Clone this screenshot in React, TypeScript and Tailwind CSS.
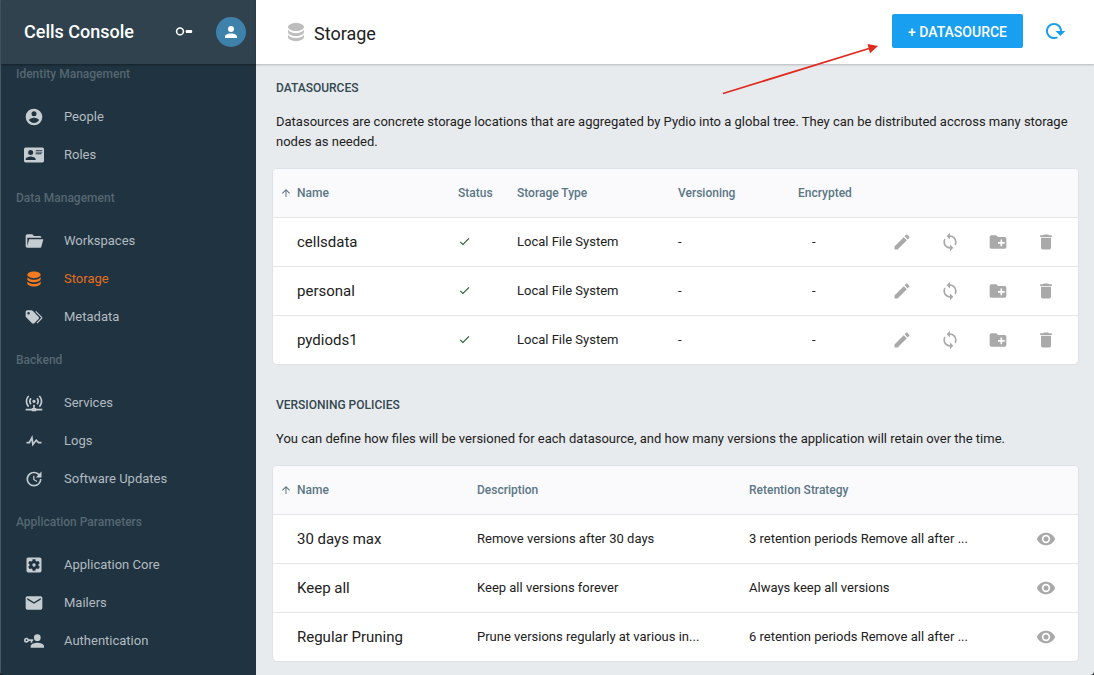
import React from "react";

const icons = {
  accountCircle:
    "M12,19.2C9.5,19.2 7.29,17.92 6,16C6.03,14 10,12.9 12,12.9C14,12.9 17.97,14 18,16C16.71,17.92 14.5,19.2 12,19.2M12,5A3,3 0 0,1 15,8A3,3 0 0,1 12,11A3,3 0 0,1 9,8A3,3 0 0,1 12,5M12,2A10,10 0 0,0 2,12A10,10 0 0,0 12,22A10,10 0 0,0 22,12C22,6.47 17.5,2 12,2Z",
  card: "M2,3H22C23.05,3 24,3.95 24,5V19C24,20.05 23.05,21 22,21H2C0.95,21 0,20.05 0,19V5C0,3.95 0.95,3 2,3M14,6V7H22V6H14M14,8V9H21.5L22,9V8H14M14,10V11H21V10H14M8,13.91C6,13.91 2,15 2,17V18H14V17C14,15 10,13.91 8,13.91M8,6A3,3 0 0,0 5,9A3,3 0 0,0 8,12A3,3 0 0,0 11,9A3,3 0 0,0 8,6Z",
  folderOpen:
    "M19,20H4C2.89,20 2,19.1 2,18V6C2,4.89 2.89,4 4,4H10L12,6H19A2,2 0 0,1 21,8H21L4,8V18L6.14,10H23.21L20.93,18.5C20.7,19.37 19.92,20 19,20Z",
  database:
    "M12,3C7.58,3 4,4.79 4,7C4,9.21 7.58,11 12,11C16.42,11 20,9.21 20,7C20,4.79 16.42,3 12,3M4,9V12C4,14.21 7.58,16 12,16C16.42,16 20,14.21 20,12V9C20,11.21 16.42,13 12,13C7.58,13 4,11.21 4,9M4,14V17C4,19.21 7.58,21 12,21C16.42,21 20,19.21 20,17V14C20,16.21 16.42,18 12,18C7.58,18 4,16.21 4,14Z",
  tags: "M5.5,9A1.5,1.5 0 0,0 7,7.5A1.5,1.5 0 0,0 5.5,6A1.5,1.5 0 0,0 4,7.5A1.5,1.5 0 0,0 5.5,9M17.41,11.58C17.77,11.94 18,12.44 18,13C18,13.55 17.78,14.05 17.41,14.41L12.41,19.41C12.05,19.77 11.55,20 11,20C10.45,20 9.95,19.78 9.58,19.41L2.59,12.42C2.22,12.05 2,11.55 2,11V6C2,4.89 2.89,4 4,4H9C9.55,4 10.05,4.22 10.41,4.58L17.41,11.58M13.54,5.71L14.54,4.71L21.41,11.58C21.78,11.94 22,12.45 22,13C22,13.55 21.78,14.05 21.42,14.41L16.04,19.79L15.04,18.79L20.75,13L13.54,5.71Z",
  accessPoint:
    "M4.93,2.93C3.12,4.74 2,7.24 2,10C2,12.76 3.12,15.26 4.93,17.07L6.34,15.66C4.89,14.22 4,12.22 4,10C4,7.79 4.89,5.78 6.34,4.34L4.93,2.93M19.07,2.93L17.66,4.34C19.11,5.78 20,7.79 20,10C20,12.22 19.11,14.22 17.66,15.66L19.07,17.07C20.88,15.26 22,12.76 22,10C22,7.24 20.88,4.74 19.07,2.93M7.76,5.76C6.67,6.85 6,8.35 6,10C6,11.65 6.67,13.15 7.76,14.24L9.17,12.83C8.45,12.11 8,11.11 8,10C8,8.89 8.45,7.89 9.17,7.17L7.76,5.76M16.24,5.76L14.83,7.17C15.55,7.89 16,8.89 16,10C16,11.11 15.55,12.11 14.83,12.83L16.24,14.24C17.33,13.15 18,11.65 18,10C18,8.35 17.33,6.85 16.24,5.76M12,8A2,2 0 0,0 10,10A2,2 0 0,0 12,12A2,2 0 0,0 14,10A2,2 0 0,0 12,8M11,14V18H10A1,1 0 0,0 9,19H2V21H9A1,1 0 0,0 10,22H14A1,1 0 0,0 15,21H22V19H15A1,1 0 0,0 14,18H13V14H11Z",
  pulse:
    "M3,13H5.79L10.1,4.79L11.28,13.75L14.5,9.66L17.83,13H21V15H17L14.67,12.67L9.92,18.73L8.94,11.31L7,15H3V13Z",
  update:
    "M21,10.12H14.22L16.96,7.3C14.23,4.6 9.81,4.5 7.08,7.2C4.35,9.91 4.35,14.28 7.08,17C9.81,19.7 14.23,19.7 16.96,17C18.32,15.65 19,14.08 19,12.1H21C21,14.08 20.12,16.65 18.36,18.39C14.85,21.87 9.15,21.87 5.64,18.39C2.14,14.92 2.11,9.28 5.62,5.81C9.13,2.34 14.76,2.34 18.27,5.81L21,3V10.12M12.5,8V12.25L16,14.33L15.28,15.54L11,13V8H12.5Z",
  settingsBox:
    "M17.25,12C17.25,12.23 17.23,12.46 17.2,12.68L18.68,13.84C18.81,13.95 18.85,14.13 18.76,14.29L17.36,16.71C17.27,16.86 17.09,16.92 16.93,16.86L15.19,16.16C14.83,16.44 14.43,16.67 14,16.85L13.75,18.7C13.72,18.87 13.57,19 13.4,19H10.6C10.43,19 10.28,18.87 10.25,18.7L10,16.85C9.56,16.67 9.17,16.44 8.81,16.16L7.07,16.86C6.91,16.92 6.73,16.86 6.64,16.71L5.24,14.29C5.15,14.13 5.19,13.95 5.32,13.84L6.8,12.68C6.77,12.46 6.75,12.23 6.75,12C6.75,11.77 6.77,11.54 6.8,11.32L5.32,10.16C5.19,10.05 5.15,9.86 5.24,9.71L6.64,7.29C6.73,7.13 6.91,7.07 7.07,7.13L8.81,7.84C9.17,7.56 9.56,7.32 10,7.15L10.25,5.29C10.28,5.13 10.43,5 10.6,5H13.4C13.57,5 13.72,5.13 13.75,5.29L14,7.15C14.43,7.32 14.83,7.56 15.19,7.84L16.93,7.13C17.09,7.07 17.27,7.13 17.36,7.29L18.76,9.71C18.85,9.86 18.81,10.05 18.68,10.16L17.2,11.32C17.23,11.54 17.25,11.77 17.25,12M19,3H5C3.89,3 3,3.89 3,5V19A2,2 0 0,0 5,21H19A2,2 0 0,0 21,19V5C21,3.89 20.1,3 19,3M12,10C10.89,10 10,10.89 10,12A2,2 0 0,0 12,14A2,2 0 0,0 14,12A2,2 0 0,0 12,10Z",
  email:
    "M20,8L12,13L4,8V6L12,11L20,6M20,4H4C2.89,4 2,4.89 2,6V18A2,2 0 0,0 4,20H20A2,2 0 0,0 22,18V6C22,4.89 21.1,4 20,4Z",
  accountKey:
    "M11,10V12H10V14H8V12H5.83C5.42,13.17 4.31,14 3,14A3,3 0 0,1 0,11A3,3 0 0,1 3,8C4.31,8 5.42,8.83 5.83,10H11M3,10A1,1 0 0,0 2,11A1,1 0 0,0 3,12A1,1 0 0,0 4,11A1,1 0 0,0 3,10M16,14C18.67,14 24,15.34 24,18V20H8V18C8,15.34 13.33,14 16,14M16,12A4,4 0 0,1 12,8A4,4 0 0,1 16,4A4,4 0 0,1 20,8A4,4 0 0,1 16,12Z",
  account:
    "M12,4A4,4 0 0,1 16,8A4,4 0 0,1 12,12A4,4 0 0,1 8,8A4,4 0 0,1 12,4M12,14C16.42,14 20,15.79 20,18V20H4V18C4,15.79 7.58,14 12,14Z",
  pencil:
    "M20.71,7.04C21.1,6.65 21.1,6 20.71,5.63L18.37,3.29C18,2.9 17.35,2.9 16.96,3.29L15.12,5.12L18.87,8.87M3,17.25V21H6.75L17.81,9.93L14.06,6.18L3,17.25Z",
  sync: "M12,18A6,6 0 0,1 6,12C6,11 6.25,10.03 6.7,9.2L5.24,7.74C4.46,8.97 4,10.43 4,12A8,8 0 0,0 12,20V23L16,19L12,15M12,4V1L8,5L12,9V6A6,6 0 0,1 18,12C18,13 17.75,13.97 17.3,14.8L18.76,16.26C19.54,15.03 20,13.57 20,12A8,8 0 0,0 12,4Z",
  folderPlus:
    "M10,4L12,6H20A2,2 0 0,1 22,8V18A2,2 0 0,1 20,20H4C2.89,20 2,19.1 2,18V6C2,4.89 2.89,4 4,4H10M15,9V12H12V14H15V17H17V14H20V12H17V9H15Z",
  trash:
    "M19,4H15.5L14.5,3H9.5L8.5,4H5V6H19M6,19A2,2 0 0,0 8,21H16A2,2 0 0,0 18,19V7H6V19Z",
  eye: "M12,9A3,3 0 0,0 9,12A3,3 0 0,0 12,15A3,3 0 0,0 15,12A3,3 0 0,0 12,9M12,17A5,5 0 0,1 7,12A5,5 0 0,1 12,7A5,5 0 0,1 17,12A5,5 0 0,1 12,17M12,4.5C7,4.5 2.73,7.61 1,12C2.73,16.39 7,19.5 12,19.5C17,19.5 21.27,16.39 23,12C21.27,7.61 17,4.5 12,4.5Z",
  check: "M21,7L9,19L3.5,13.5L4.91,12.09L9,16.17L19.59,5.59L21,7Z",
  arrowUp:
    "M13,20H11V8L5.5,13.5L4.08,12.08L12,4.16L19.92,12.08L18.5,13.5L13,8V20Z",
  reload:
    "M19,12H22.32L17.37,16.95L12.42,12H16.97C17,10.46 16.42,8.93 15.24,7.75C12.9,5.41 9.1,5.41 6.76,7.75C4.42,10.09 4.42,13.9 6.76,16.24C8.6,18.08 11.36,18.47 13.58,17.41L15.05,18.88C12,20.69 8,20.29 5.34,17.65C2.22,14.53 2.23,9.47 5.35,6.35C8.5,3.22 13.53,3.21 16.66,6.34C18.22,7.9 19,9.95 19,12Z",
};

type IconName = keyof typeof icons;

function Icon({ name, className }: { name: IconName; className: string }) {
  return (
    <svg viewBox="0 0 24 24" fill="currentColor" className={`shrink-0 ${className}`}>
      <path d={icons[name]} />
    </svg>
  );
}

type NavItem = { icon: IconName; label: string; active?: boolean };

const nav: { title: string; items: NavItem[] }[] = [
  {
    title: "Identity Management",
    items: [
      { icon: "accountCircle", label: "People" },
      { icon: "card", label: "Roles" },
    ],
  },
  {
    title: "Data Management",
    items: [
      { icon: "folderOpen", label: "Workspaces" },
      { icon: "database", label: "Storage", active: true },
      { icon: "tags", label: "Metadata" },
    ],
  },
  {
    title: "Backend",
    items: [
      { icon: "accessPoint", label: "Services" },
      { icon: "pulse", label: "Logs" },
      { icon: "update", label: "Software Updates" },
    ],
  },
  {
    title: "Application Parameters",
    items: [
      { icon: "settingsBox", label: "Application Core" },
      { icon: "email", label: "Mailers" },
      { icon: "accountKey", label: "Authentication" },
    ],
  },
];

function Sidebar() {
  return (
    <aside className="flex w-64 shrink-0 flex-col border-l border-[#465a65] bg-[#1f3340]">
      <div className="z-10 flex h-16 shrink-0 items-center bg-[#2f424d] pr-2.5 pl-[23px] shadow-[0_1px_2px_rgba(0,0,0,0.35)]">
        <h1 className="mb-0.5 flex-1 text-[18px] font-medium text-white">Cells Console</h1>
        <svg viewBox="0 0 18 10" className="mr-[23px] h-2.5 w-[18px]">
          <circle cx="5" cy="4.4" r="3.4" fill="none" stroke="#fff" strokeWidth="1.6" />
          <rect x="10.6" y="2.9" width="6.6" height="3.1" rx="1" fill="#fff" />
        </svg>
        <div className="flex size-[30px] items-center justify-center rounded-full bg-[#3e82ac] text-white">
          <Icon name="account" className="size-[18px]" />
        </div>
      </div>
      <nav className="-mt-3.5 min-h-0 flex-1 overflow-hidden">
        {nav.map((group) => (
          <section key={group.title}>
            <h2 className="flex h-12 items-center pl-[15px] text-[12px] font-medium text-[#566772]">
              {group.title}
            </h2>
            {group.items.map((item) => (
              <a
                key={item.label}
                className={`flex h-[38px] items-center gap-5 pl-[23px] text-[13px] ${item.active ? "text-[#e2701f]" : "text-[#b3bbc0]"}`}
              >
                <Icon name={item.icon} className={`mb-px size-5 ${item.active ? "text-[#f47a20]" : "text-[#c6cdd1]"}`} />
                {item.label}
              </a>
            ))}
          </section>
        ))}
      </nav>
    </aside>
  );
}

function Intro({ title, children }: { title: string; children: React.ReactNode }) {
  return (
    <div className="px-1">
      <h3 className="text-[12px] leading-4 font-medium text-[#33474f]">{title}</h3>
      <p className="mt-4 text-[13px] leading-5 text-[#212121]">{children}</p>
    </div>
  );
}

function HeadRow({ cols, children }: { cols: string; children: React.ReactNode }) {
  return (
    <div className={`grid h-[49px] items-center border-b border-[#e4e7ea] bg-[#fafafc] text-[12px] font-medium text-[#5b7685] ${cols}`}>
      <span className="flex items-center gap-[5px] pl-[7px]">
        <Icon name="arrowUp" className="size-3" />
        Name
      </span>
      {children}
    </div>
  );
}

const card = "overflow-hidden rounded-[5px] border border-[#dee2e6] bg-white";
const row = "grid h-[49px] items-center border-b border-[#e4e7ea] text-[13px] text-[#212121] last:h-12 last:border-b-0";
const sourceCols = "grid-cols-[185px_59px_161px_120px_80px_1fr]";
const policyCols = "grid-cols-[204px_272px_1fr_64px]";

const policies = [
  ["30 days max", "Remove versions after 30 days", "3 retention periods Remove all after ..."],
  ["Keep all", "Keep all versions forever", "Always keep all versions"],
  ["Regular Pruning", "Prune versions regularly at various in...", "6 retention periods Remove all after ..."],
];

function Main() {
  return (
    <main className="relative flex min-w-0 flex-1 flex-col bg-[#e8ebee]">
      <header className="z-10 flex h-16 shrink-0 items-center bg-white pr-[27px] pl-7 shadow-[0_1px_2px_rgba(0,0,0,0.22)]">
        <Icon name="database" className="size-6 text-[#bdbdbd]" />
        <h2 className="mt-0.5 ml-1.5 flex-1 text-[18px] text-[#212121]">Storage</h2>
        <button className="mr-5 mb-0.5 h-[34px] w-[131px] rounded-[2px] bg-[#189fef] pt-0.5 text-[14px] font-medium text-white">
          + DATASOURCE
        </button>
        <Icon name="reload" className="mb-0.5 size-6 text-[#189fef]" />
      </header>
      <div className="flex flex-col pt-4 pr-[15px] pl-4">
        <Intro title="DATASOURCES">
          Datasources are concrete storage locations that are aggregated by Pydio into a global tree. They can be
          distributed accross many storage nodes as needed.
        </Intro>
        <div className={`mt-4 ${card}`}>
          <HeadRow cols={sourceCols}>
            <span>Status</span>
            <span>Storage Type</span>
            <span>Versioning</span>
            <span>Encrypted</span>
          </HeadRow>
          {["cellsdata", "personal", "pydiods1"].map((name) => (
            <div key={name} className={`${row} ${sourceCols}`}>
              <span className="pl-6 text-[15px]">{name}</span>
              <Icon name="check" className="mb-0.5 size-[13px] text-[#1b5e20]" />
              <span>Local File System</span>
              <span>-</span>
              <span className="pl-3.5">-</span>
              <span className="mb-px flex justify-end gap-7 pr-[22px] text-[#a9a9a9]">
                <Icon name="pencil" className="size-5" />
                <Icon name="sync" className="size-5" />
                <Icon name="folderPlus" className="size-5" />
                <Icon name="trash" className="size-5" />
              </span>
            </div>
          ))}
        </div>
        <div className="mt-8">
          <Intro title="VERSIONING POLICIES">
            You can define how files will be versioned for each datasource, and how many versions the application will
            retain over the time.
          </Intro>
        </div>
        <div className={`mt-4 ${card}`}>
          <HeadRow cols={policyCols}>
            <span>Description</span>
            <span>Retention Strategy</span>
          </HeadRow>
          {policies.map(([name, description, strategy]) => (
            <div key={name} className={`${row} ${policyCols}`}>
              <span className="pl-6 text-[15px]">{name}</span>
              <span>{description}</span>
              <span>{strategy}</span>
              <Icon name="eye" className="mb-px ml-[22px] size-5 text-[#a9a9a9]" />
            </div>
          ))}
        </div>
      </div>
      <svg viewBox="0 0 160 56" className="pointer-events-none absolute top-10 left-[464px] z-20 h-14 w-40">
        <path d="M3 53.5L149 8.5" stroke="#df2a1c" strokeWidth="1.8" />
        <path d="M158 6L147.5 4L150 13.3Z" fill="#df2a1c" />
      </svg>
    </main>
  );
}

export default function App() {
  return (
    <div className="h-[675px] w-full bg-[#15191c]">
      <div className="flex h-full overflow-hidden rounded-b-[4px] font-['Roboto',sans-serif]">
        <Sidebar />
        <Main />
      </div>
    </div>
  );
}
